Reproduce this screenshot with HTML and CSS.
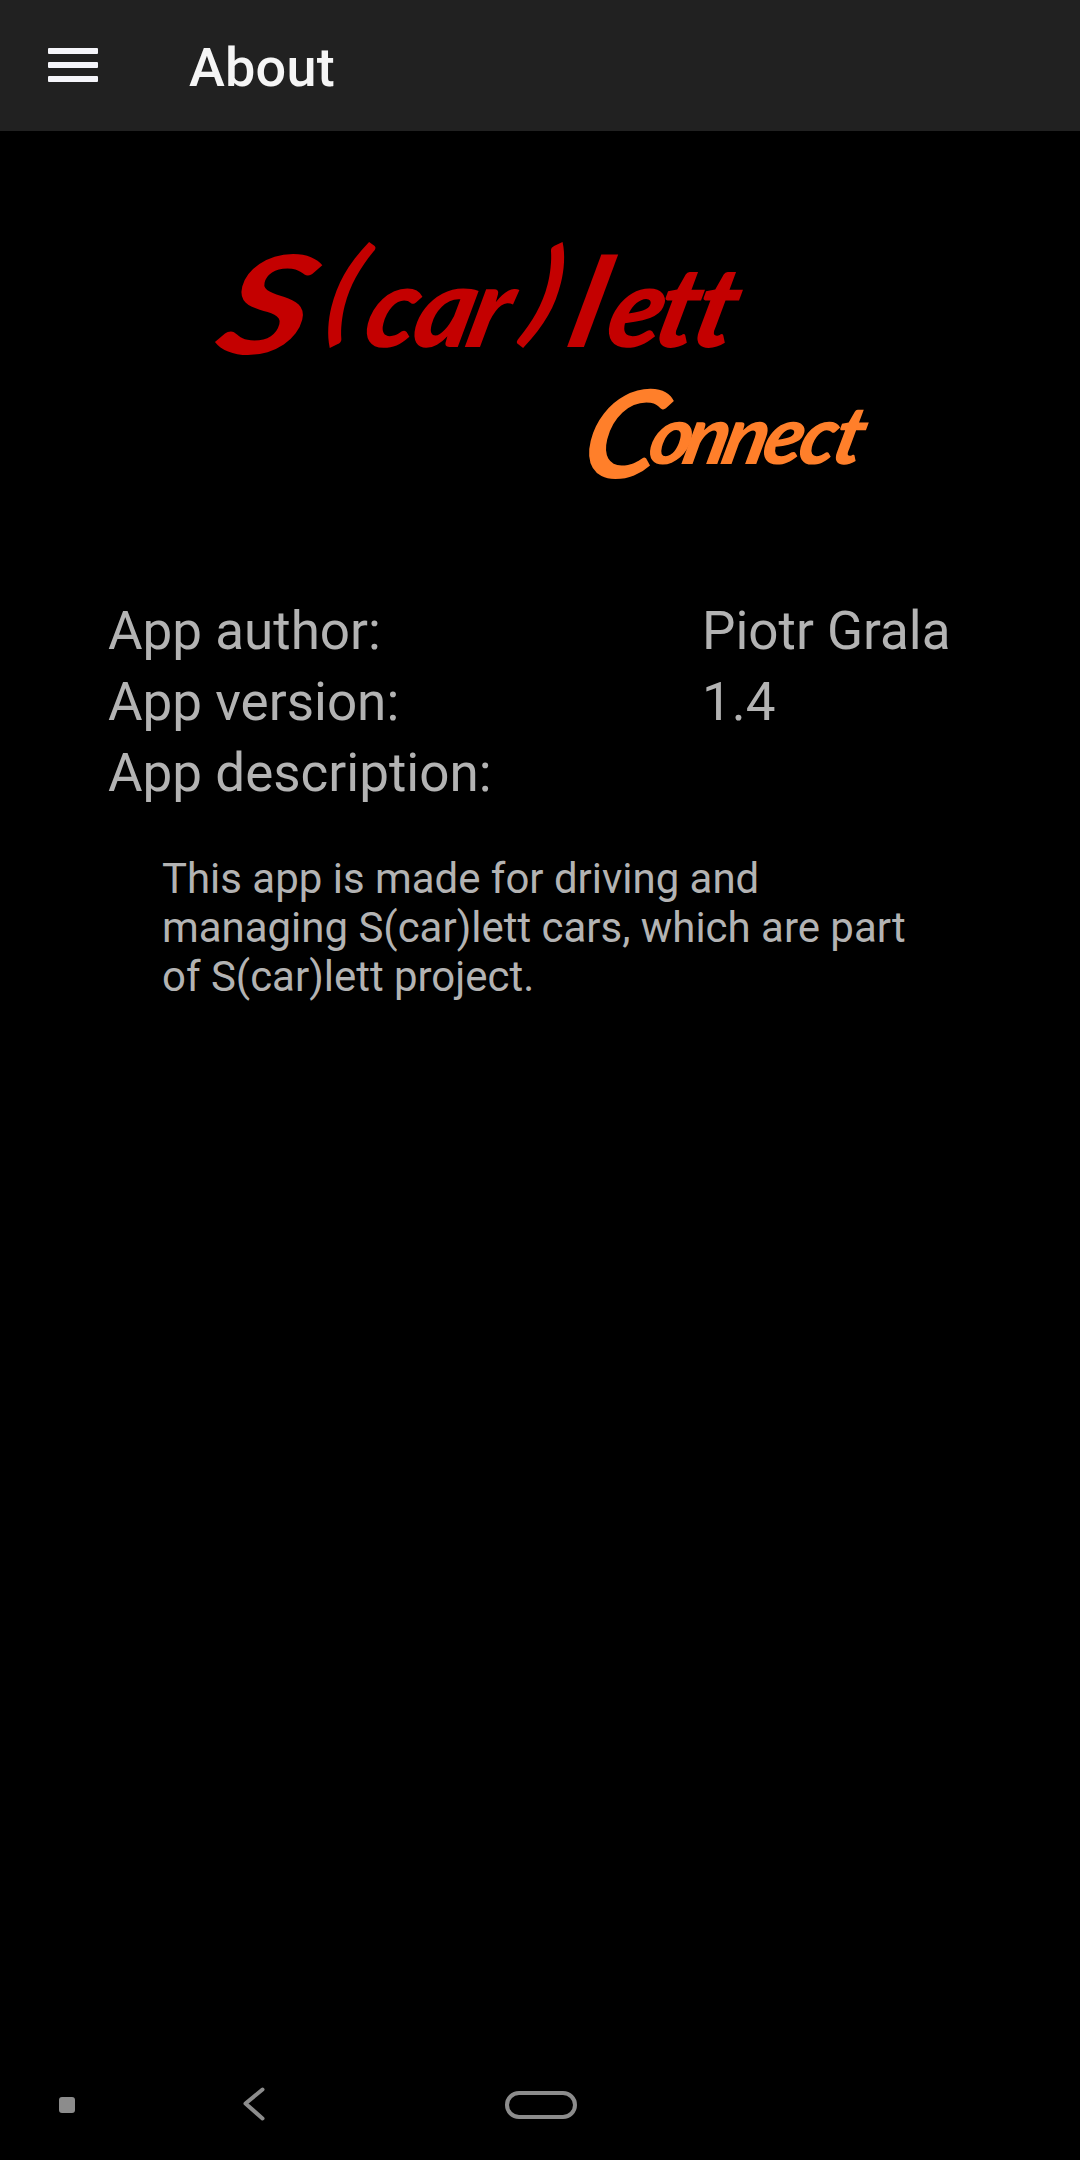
FILE: index.html
```html
<!DOCTYPE html>
<html lang="en">
<head>
<meta charset="utf-8">
<title>About</title>
<link rel="stylesheet" href="styles.css">
</head>
<body>
<div class="app">
  <header class="toolbar">
    <svg class="menu-icon" viewBox="0 0 50 34" aria-hidden="true">
      <rect width="50" height="6" rx="1"/><rect y="14" width="50" height="6" rx="1"/><rect y="28" width="50" height="6" rx="1"/>
    </svg>
    <h1 class="title">About</h1>
  </header>
  <main class="content">
    <svg class="logo" viewBox="200 230 680 260" role="img" aria-label="S(car)lett Connect">
      <text class="brand" transform="translate(0 347) skewX(-14)" x="214 318 360 409 463 518 565 602 650 688" y="7 -17 0 0 0 -17 0 0 0 0"><tspan class="brand-cap" textLength="89" lengthAdjust="spacingAndGlyphs">S</tspan>(car)<tspan class="brand-tall">l</tspan>ett</text>
      <text class="product" transform="translate(0 464) skewX(-14)" x="580 645 680 719 759 795 829" y="14 0 0 0 0 0 0"><tspan class="product-cap">C</tspan>onnect</text>
    </svg>
    <dl class="details">
      <dt>App author:</dt><dd>Piotr Grala</dd>
      <dt>App version:</dt><dd>1.4</dd>
      <dt>App description:</dt>
    </dl>
    <p class="description">This app is made for driving and managing S(car)lett cars, which are part of S(car)lett project.</p>
  </main>
  <nav class="navbar">
    <span class="dot"></span>
    <svg class="back" viewBox="0 0 22 34" aria-hidden="true"><path d="M19.5 2.5L2.5 16.5L19.5 31.5"/></svg>
    <span class="home"></span>
  </nav>
</div>
</body>
</html>
```
FILE: styles.css
```css
* { box-sizing: border-box; }
body { margin: 0; background: #000; color: #b3b3b3; font-family: Roboto, sans-serif; }
.app { display: flex; flex-direction: column; width: 1080px; height: 2160px; overflow: hidden; }
.toolbar { display: flex; align-items: center; height: 131px; padding-left: 48px; background: #212121; }
.menu-icon { width: 50px; height: 34px; margin: 0 91px 2px 0; fill: #f5f5fa; }
.title { margin: 5px 0 0; color: #f5f5f5; font-size: 54px; font-weight: 500; line-height: 64px; letter-spacing: 0.2px; }
.content { flex: 1; padding: 99px 108px 0; }
.logo { display: block; width: 680px; height: 260px; margin-left: 92px; overflow: visible; }
.brand, .product { font-family: Lato, sans-serif; font-style: italic; font-weight: 900; }
.brand { fill: #c40000; font-size: 112px; }
.brand-cap { font-size: 137px; font-weight: 700; }
.brand-tall { font-size: 124px; }
.product { fill: #ff7f2a; font-size: 81px; }
.product-cap { font-size: 122px; font-weight: 700; }
.details { display: grid; grid-template-columns: 594px 1fr; margin: 106px 0 0; font-size: 53px; line-height: 71px; white-space: nowrap; }
.details dd { margin: 0; }
.description { width: 756px; margin: 45px 0 0 54px; font-size: 41.95px; line-height: 49px; }
.navbar { display: flex; align-items: center; height: 110px; padding-left: 59px; }
.dot { width: 16px; height: 16px; border-radius: 3px; background: #8c8c8c; }
.back { width: 22px; height: 34px; margin: 0 0 2px 168px; fill: none; stroke: #8c8c8c; stroke-width: 4; stroke-linecap: round; stroke-linejoin: round; }
.home { width: 72px; height: 28px; margin-left: 240px; border: 4px solid #8c8c8c; border-radius: 14px; }
```
